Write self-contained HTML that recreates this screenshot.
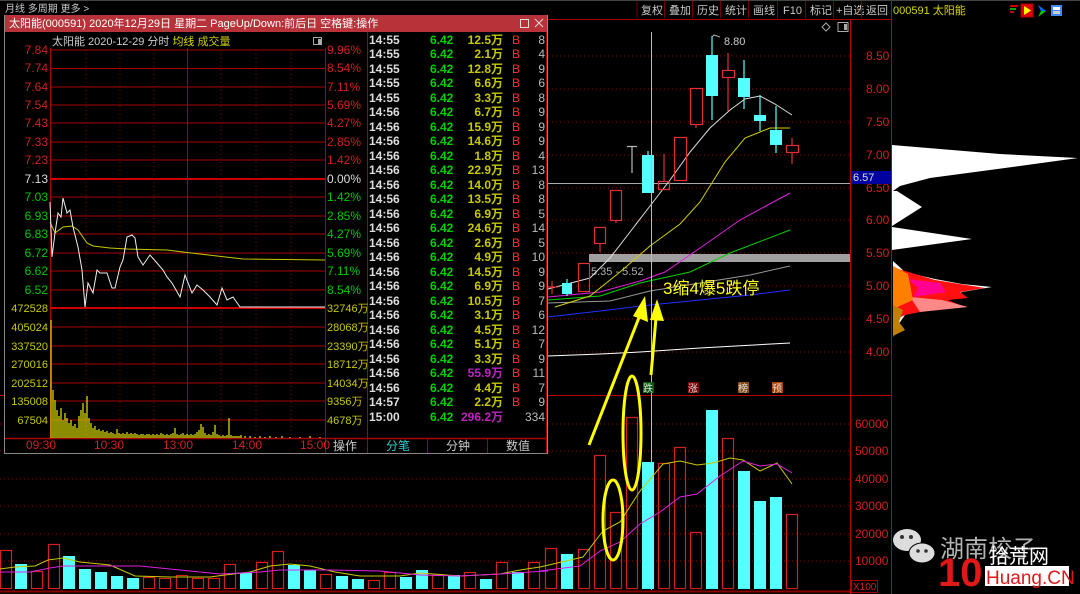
<!DOCTYPE html>
<html><head><meta charset="utf-8"><style>
html,body{margin:0;padding:0;background:#000;width:1080px;height:594px;overflow:hidden}
svg{display:block;font-family:"Liberation Sans","Noto Sans CJK SC",sans-serif}
.g{fill:#c8c8c8}
</style></head><body>
<svg width="1080" height="594" viewBox="0 0 1080 594" font-size="11" xmlns="http://www.w3.org/2000/svg">
<rect width="1080" height="594" fill="#000"/>
<!-- top bar -->
<text x="5" y="12" class="g" font-size="10">月线  多周期  更多 &gt;</text>
<g fill="#c8c8c8" font-size="11">
<text x="641" y="14">复权</text><text x="669" y="14">叠加</text><text x="697" y="14">历史</text><text x="725" y="14">统计</text><text x="753" y="14">画线</text><text x="783" y="14">F10</text><text x="810" y="14">标记</text><text x="836" y="14">+自选</text><text x="866" y="14">返回</text>
</g>
<g stroke="#700" stroke-width="1">
<line x1="637" y1="1" x2="637" y2="18"/><line x1="664.5" y1="1" x2="664.5" y2="18"/><line x1="692.5" y1="1" x2="692.5" y2="18"/><line x1="720.5" y1="1" x2="720.5" y2="18"/><line x1="748.5" y1="1" x2="748.5" y2="18"/><line x1="777.5" y1="1" x2="777.5" y2="18"/><line x1="805.5" y1="1" x2="805.5" y2="18"/><line x1="833.5" y1="1" x2="833.5" y2="18"/><line x1="861.5" y1="1" x2="861.5" y2="18"/>
</g>
<line x1="548" y1="19.5" x2="891" y2="19.5" stroke="#a00"/>
<line x1="0" y1="0.5" x2="1080" y2="0.5" stroke="#444"/>
<text x="893" y="14" fill="#d8d800" font-size="11">000591 太阳能</text>
<g><rect x="1010" y="5" width="8" height="2" fill="#c00"/><rect x="1010" y="8" width="6" height="2" fill="#0a0"/><rect x="1010" y="11" width="4" height="2" fill="#c00"/>
<rect x="1021" y="4" width="12" height="13" fill="#d00" stroke="#a00"/><path d="M1024 6 L1031 10.5 L1024 15Z" fill="#ff0"/>
<path d="M1038 5 L1046 11 L1038 17 L1041 11Z" fill="#0c0"/><path d="M1038 5 L1046 11 L1041 11Z" fill="#06f"/>
<rect x="1051" y="5" width="11" height="11" fill="#48f"/><rect x="1053" y="7" width="7" height="3" fill="#fff"/><rect x="1053" y="11" width="7" height="3" fill="#ccc"/></g>
<!-- main chart grid -->
<g stroke="#900" stroke-dasharray="1,3">
<line x1="548" y1="56" x2="850" y2="56"/><line x1="548" y1="89" x2="850" y2="89"/><line x1="548" y1="122" x2="850" y2="122"/><line x1="548" y1="155" x2="850" y2="155"/><line x1="548" y1="188" x2="850" y2="188"/><line x1="548" y1="220" x2="850" y2="220"/><line x1="548" y1="253" x2="850" y2="253"/><line x1="548" y1="286" x2="850" y2="286"/><line x1="548" y1="319" x2="850" y2="319"/><line x1="548" y1="352" x2="850" y2="352"/>
<line x1="0" y1="424" x2="850" y2="424"/><line x1="0" y1="451" x2="850" y2="451"/><line x1="0" y1="479" x2="850" y2="479"/><line x1="0" y1="506" x2="850" y2="506"/><line x1="0" y1="534" x2="850" y2="534"/><line x1="0" y1="561" x2="850" y2="561"/>
</g>
<line x1="850.5" y1="19" x2="850.5" y2="594" stroke="#b00"/>
<line x1="891.5" y1="0" x2="891.5" y2="594" stroke="#b00"/>
<line x1="0" y1="395.5" x2="891" y2="395.5" stroke="#b00"/>
<line x1="0" y1="591.5" x2="850" y2="591.5" stroke="#800" stroke-width="2"/>
<g font-size="12" fill="#d02020">
<text x="866" y="60">8.50</text><text x="866" y="93">8.00</text><text x="866" y="126">7.50</text><text x="866" y="159">7.00</text><text x="866" y="192">6.50</text><text x="866" y="224">6.00</text><text x="866" y="257">5.50</text><text x="866" y="290">5.00</text><text x="866" y="323">4.50</text><text x="866" y="356">4.00</text>
<text x="855" y="428">60000</text><text x="855" y="455">50000</text><text x="855" y="483">40000</text><text x="855" y="510">30000</text><text x="855" y="538">20000</text><text x="855" y="565">10000</text>
</g>
<rect x="851.5" y="580.5" width="26" height="12" fill="none" stroke="#a00"/><text x="853" y="590" fill="#d02020" font-size="10">X100</text>
<path d="M826 23 L830 27 L826 31 L822 27Z" fill="none" stroke="#aaa"/>
<rect x="838" y="22.5" width="10" height="9" fill="none" stroke="#aaa"/><rect x="844" y="24" width="3" height="6" fill="#aaa"/>
<rect x="589" y="254" width="261" height="8" fill="#a0a0a0"/>
<text x="591" y="275" fill="#b0b0b0" font-size="11">5.35 - 5.52</text>
<line x1="548" y1="183.5" x2="850" y2="183.5" stroke="#aaa"/>
<rect x="851" y="171" width="40" height="13" fill="#0000a0"/><text x="853" y="181" fill="#ddd" font-size="11">6.57</text>
<g fill="none" stroke-width="1">
<polyline stroke="#fff" points="548,356 600,354 640,352 700,348 790,343"/>
<polyline stroke="#2030ff" points="548,317 600,311 650,305 700,300 750,295 790,290"/>
<polyline stroke="#999" points="548,303 610,301 650,291 700,283 750,275 790,266"/>
<polyline stroke="#00d000" points="548,300 600,296 640,283 690,272 730,253 790,230"/>
<polyline stroke="#e020e0" points="548,297 600,292 640,281 665,272 700,248 740,220 790,193"/>
<polyline stroke="#d0d000" points="555,307 590,296 620,272 650,246 680,224 700,202 725,162 745,138 770,128 790,128"/>
<polyline stroke="#ddd" points="548,289 590,278 610,258 630,232 650,206 670,180 690,152 710,128 730,110 745,99 760,96 775,104 792,115"/>
</g>
<g stroke-width="1.2">
<line x1="552" y1="281" x2="552" y2="294" stroke="#e03030"/><line x1="546" y1="287" x2="558" y2="287" stroke="#e03030"/>
<line x1="567" y1="279" x2="567" y2="296" stroke="#5ff"/><rect x="562" y="283" width="10" height="11" fill="#5ff"/>
<rect x="578.5" y="263.5" width="11" height="28" fill="none" stroke="#e03030"/>
<line x1="600" y1="243" x2="600" y2="252" stroke="#e03030"/><rect x="594.5" y="227.5" width="11" height="16" fill="none" stroke="#e03030"/>
<line x1="616" y1="220" x2="616" y2="223" stroke="#e03030"/><rect x="610.5" y="190.5" width="11" height="30" fill="none" stroke="#e03030"/>
<line x1="632" y1="146" x2="632" y2="173" stroke="#bbb"/><line x1="627" y1="146.5" x2="637" y2="146.5" stroke="#bbb"/>
<line x1="648" y1="151" x2="648" y2="193" stroke="#5ff"/><rect x="642" y="155" width="12" height="38" fill="#5ff"/>
<line x1="664" y1="154" x2="664" y2="181" stroke="#e03030"/><rect x="658.5" y="181.5" width="11" height="8" fill="none" stroke="#e03030"/>
<rect x="674.5" y="137.5" width="12" height="43" fill="none" stroke="#e03030"/>
<line x1="696" y1="125" x2="696" y2="128" stroke="#e03030"/><rect x="690.5" y="88.5" width="12" height="36" fill="none" stroke="#e03030"/>
<line x1="712" y1="36" x2="712" y2="120" stroke="#5ff"/><rect x="706" y="55" width="12" height="41" fill="#5ff"/>
<line x1="728" y1="53" x2="728" y2="111" stroke="#e03030"/><rect x="722.5" y="70.5" width="12" height="7" fill="#000" stroke="#e03030"/>
<line x1="744" y1="60" x2="744" y2="109" stroke="#5ff"/><rect x="738" y="78" width="12" height="19" fill="#5ff"/>
<line x1="760" y1="95" x2="760" y2="131" stroke="#5ff"/><rect x="754" y="115" width="12" height="6" fill="#5ff"/>
<line x1="776" y1="106" x2="776" y2="153" stroke="#5ff"/><rect x="770" y="130" width="12" height="15" fill="#5ff"/>
<line x1="792" y1="138" x2="792" y2="164" stroke="#e03030"/><rect x="786.5" y="145.5" width="12" height="7" fill="#000" stroke="#e03030"/>
</g>
<path d="M712 37 L714 35 L720 37" stroke="#aaa" fill="none"/><text x="724" y="45" fill="#ccc" font-size="11">8.80</text>
<line x1="651.5" y1="32" x2="651.5" y2="590" stroke="#bbb"/>
<rect x="643" y="382" width="11" height="11" fill="#0a5a0a"/><text x="643" y="392" fill="#ddd" font-size="10">跌</text>
<rect x="688" y="382" width="11" height="11" fill="#700"/><text x="688" y="392" fill="#ddd" font-size="10">涨</text>
<rect x="738" y="382" width="11" height="11" fill="#8a4a10"/><text x="738" y="392" fill="#ddd" font-size="10">榜</text>
<rect x="772" y="382" width="11" height="11" fill="#b04000"/><text x="772" y="392" fill="#ddd" font-size="10">预</text>
<g stroke="#d02020" fill="none" stroke-width="1.2">
<rect x="545.5" y="548.5" width="11" height="40"/><rect x="578.5" y="549.5" width="11" height="39"/><rect x="594.5" y="455.5" width="11" height="133"/><rect x="610.5" y="512.5" width="11" height="76"/><rect x="626.5" y="417.5" width="11" height="171"/><rect x="658.5" y="463.5" width="11" height="125"/><rect x="674.5" y="447.5" width="11" height="141"/><rect x="690.5" y="532.5" width="11" height="56"/><rect x="722.5" y="438.5" width="11" height="150"/><rect x="786.5" y="514.5" width="11" height="74"/>
</g>
<g fill="#5ff"><rect x="561" y="554" width="12" height="35"/><rect x="642" y="462" width="12" height="127"/><rect x="706" y="410" width="12" height="179"/><rect x="738" y="471" width="12" height="118"/><rect x="754" y="501" width="12" height="88"/><rect x="770" y="497" width="12" height="92"/></g>
<polyline fill="none" stroke="#c8c800" points="540,567 583,557 603,531 620,522 640,491 663,464 680,461 697,465 713,463 730,458 743,460 760,471 777,463 792,484"/>
<polyline fill="none" stroke="#e020e0" points="540,571 580,566 600,551 620,542 640,524 660,512 680,497 697,494 720,476 743,461 760,466 777,464 792,473"/>
<g fill="none" stroke="#ffff00" stroke-width="3">
<ellipse cx="613" cy="520" rx="10" ry="40"/><ellipse cx="632" cy="433" rx="9" ry="57"/>
<line x1="589" y1="445" x2="640" y2="315"/><line x1="651" y1="375" x2="656" y2="318"/>
</g>
<path d="M645 296 L648 322 L633 316Z" fill="#ff0"/><path d="M657 299 L664 321 L650 320Z" fill="#ff0"/>
<text x="663" y="294" fill="#ffff20" font-size="17">3缩4爆5跌停</text>
<g stroke="#d02020" fill="none" stroke-width="1.2">
<rect x="0.5" y="550.5" width="11" height="38"/><rect x="31.5" y="571.5" width="11" height="17"/><rect x="48.5" y="544.5" width="11" height="44"/><rect x="143.5" y="577.5" width="11" height="11"/><rect x="159.5" y="578.5" width="11" height="10"/><rect x="176.5" y="575.5" width="11" height="13"/><rect x="192.5" y="578.5" width="11" height="10"/><rect x="208.5" y="578.5" width="11" height="10"/><rect x="224.5" y="564.5" width="11" height="24"/><rect x="256.5" y="562.5" width="11" height="26"/><rect x="272.5" y="551.5" width="11" height="37"/><rect x="320.5" y="574.5" width="11" height="14"/><rect x="368.5" y="580.5" width="11" height="8"/><rect x="384.5" y="572.5" width="11" height="16"/><rect x="432.5" y="575.5" width="11" height="13"/><rect x="464.5" y="572.5" width="11" height="16"/><rect x="496.5" y="562.5" width="11" height="26"/><rect x="528.5" y="562.5" width="11" height="26"/>
</g>
<g fill="#5ff"><rect x="15" y="564" width="12" height="25"/><rect x="63" y="556" width="12" height="33"/><rect x="79" y="569" width="12" height="20"/><rect x="95" y="572" width="12" height="17"/><rect x="111" y="576" width="12" height="13"/><rect x="127" y="578" width="12" height="11"/><rect x="240" y="573" width="12" height="16"/><rect x="288" y="565" width="12" height="24"/><rect x="304" y="570" width="12" height="19"/><rect x="336" y="576" width="12" height="13"/><rect x="352" y="579" width="12" height="10"/><rect x="400" y="577" width="12" height="12"/><rect x="416" y="570" width="12" height="19"/><rect x="448" y="575" width="12" height="14"/><rect x="480" y="579" width="12" height="10"/><rect x="512" y="572" width="12" height="17"/></g>
<polyline fill="none" stroke="#c8c800" points="0,569 15,567 35,566 48,560 63,558 80,562 110,565 135,576 170,577 210,577 225,575 250,572 270,566 290,564 310,566 335,572 360,576 400,576 420,573 460,576 480,575 500,574 520,570 540,567"/>
<polyline fill="none" stroke="#e020e0" points="0,572 30,572 50,568 63,566 100,566 140,566 180,570 220,574 260,572 280,570 330,570 380,571 420,575 460,576 500,574 530,572 548,571"/>
<!-- right panel profile -->
<path d="M892 145 L1000 154 L1078 158 L990 170 L930 178 L900 186 L893 191 L892 191Z" fill="#fff"/>
<path d="M897 191 L922 207 L892 226 L892 191Z" fill="#fff"/>
<path d="M892 227 L972 239 L892 250Z" fill="#fff"/>
<path d="M893 261 L905 272 L935 279 L962 284 L992 287 L962 292 L940 302 L905 315 L898 325 L893 337Z" fill="#fff"/>
<path d="M895 268 L935 280 L985 288 L960 292 L968 298 L948 300 L962 306 L930 310 L905 315 L895 320Z" fill="#ff1010"/>
<path d="M908 279 L940 283 L946 292 L914 297 L918 288Z" fill="#ff0090"/>
<path d="M910 297 L942 300 L968 307 L920 312Z" fill="#ff8888"/>
<path d="M893 266 L908 274 L913 300 L902 305 L893 309Z" fill="#ff8000"/>
<path d="M893 305 L903 310 L899 322 L905 330 L893 336Z" fill="#c08000"/>
<!-- logo -->
<g fill="#ddd"><ellipse cx="907" cy="540" rx="14" ry="11"/><ellipse cx="922" cy="553" rx="13" ry="10"/></g>
<g fill="#333"><circle cx="902" cy="537" r="2"/><circle cx="911" cy="537" r="2"/><circle cx="918" cy="551" r="1.8"/><circle cx="926" cy="551" r="1.8"/></g>
<ellipse cx="922" cy="553" rx="13" ry="10" fill="none" stroke="#000" stroke-width="1"/>
<text x="940" y="557" fill="#eee" fill-opacity="0.75" font-size="24">湖南校子</text>
<text x="938" y="586" fill="#e01818" font-size="40" font-weight="bold">10</text>
<rect x="985" y="566" width="84" height="20" fill="#fff"/>
<text x="986" y="584" fill="#e01818" font-size="19">Huang.CN</text>
<text x="989" y="563" fill="#fff" font-size="20">拾荒网</text>

<!-- POPUP -->
<rect x="4" y="15" width="544" height="438" fill="#000"/>
<rect x="4.5" y="15.5" width="543" height="438" fill="none" stroke="#888"/>
<rect x="5" y="15" width="542" height="17" fill="#b8323a"/>
<text x="9" y="27" fill="#fff" font-size="11">太阳能(000591) 2020年12月29日 星期二 PageUp/Down:前后日 空格键:操作</text>
<rect x="520.5" y="19.5" width="8" height="8" fill="none" stroke="#ddd"/>
<path d="M535 19 L543 27 M543 19 L535 27" stroke="#ddd"/>
<text x="52" y="45" fill="#ccc" font-size="11">太阳能   2020-12-29 分时 <tspan fill="#dddd00">均线</tspan> <tspan fill="#c8c800">成交量</tspan></text>
<rect x="313.5" y="37.5" width="8" height="7" fill="none" stroke="#aaa"/><rect x="318" y="39" width="3" height="5" fill="#aaa"/>
<g stroke="#a00" stroke-width="1">
<line x1="50" y1="50" x2="325" y2="50"/><line x1="50" y1="68.5" x2="325" y2="68.5"/><line x1="50" y1="87" x2="325" y2="87"/><line x1="50" y1="105" x2="325" y2="105"/><line x1="50" y1="123" x2="325" y2="123"/><line x1="50" y1="142" x2="325" y2="142"/><line x1="50" y1="160" x2="325" y2="160"/>
<line x1="50" y1="179" x2="325" y2="179" stroke-width="2" stroke="#c00"/>
<line x1="50" y1="197" x2="325" y2="197"/><line x1="50" y1="216" x2="325" y2="216"/><line x1="50" y1="234" x2="325" y2="234"/><line x1="50" y1="253" x2="325" y2="253"/><line x1="50" y1="271" x2="325" y2="271"/><line x1="50" y1="290" x2="325" y2="290"/>
<line x1="50" y1="308" x2="325" y2="308" stroke-width="2" stroke="#c00"/>
<line x1="50" y1="327" x2="325" y2="327"/><line x1="50" y1="346" x2="325" y2="346"/><line x1="50" y1="364" x2="325" y2="364"/><line x1="50" y1="383" x2="325" y2="383"/><line x1="50" y1="401" x2="325" y2="401"/><line x1="50" y1="420" x2="325" y2="420"/>
<line x1="5" y1="438.5" x2="547" y2="438.5" stroke-width="1.5"/>
<line x1="50.5" y1="48" x2="50.5" y2="438"/><line x1="325.5" y1="48" x2="325.5" y2="453"/><line x1="187.5" y1="48" x2="187.5" y2="438"/>
<line x1="367.5" y1="32" x2="367.5" y2="453"/>
<line x1="427.5" y1="438" x2="427.5" y2="453"/><line x1="487.5" y1="438" x2="487.5" y2="453"/><line x1="546.5" y1="32" x2="546.5" y2="453"/>
</g>
<g stroke="#900" stroke-dasharray="1,3">
<line x1="86" y1="50" x2="86" y2="438"/><line x1="120" y1="50" x2="120" y2="438"/><line x1="154" y1="50" x2="154" y2="438"/><line x1="221" y1="50" x2="221" y2="438"/><line x1="256" y1="50" x2="256" y2="438"/><line x1="291" y1="50" x2="291" y2="438"/>
</g>
<g font-size="12" text-anchor="end">
<text x="48" y="54" fill="#d02020">7.84</text><text x="48" y="72" fill="#d02020">7.74</text><text x="48" y="91" fill="#d02020">7.64</text><text x="48" y="109" fill="#d02020">7.54</text><text x="48" y="127" fill="#d02020">7.43</text><text x="48" y="146" fill="#d02020">7.33</text><text x="48" y="164" fill="#d02020">7.23</text><text x="48" y="183" fill="#ddd">7.13</text>
<text x="48" y="201" fill="#00c800">7.03</text><text x="48" y="220" fill="#00c800">6.93</text><text x="48" y="238" fill="#00c800">6.83</text><text x="48" y="257" fill="#00c800">6.72</text><text x="48" y="275" fill="#00c800">6.62</text><text x="48" y="294" fill="#00c800">6.52</text>
<g fill="#c8c800" font-size="11"><text x="48" y="312">472528</text><text x="48" y="331">405024</text><text x="48" y="350">337520</text><text x="48" y="368">270016</text><text x="48" y="387">202512</text><text x="48" y="405">135008</text><text x="48" y="424">67504</text></g>
</g>
<g font-size="12">
<text x="327" y="54" fill="#d02020">9.96%</text><text x="327" y="72" fill="#d02020">8.54%</text><text x="327" y="91" fill="#d02020">7.11%</text><text x="327" y="109" fill="#d02020">5.69%</text><text x="327" y="127" fill="#d02020">4.27%</text><text x="327" y="146" fill="#d02020">2.85%</text><text x="327" y="164" fill="#d02020">1.42%</text><text x="327" y="183" fill="#ddd">0.00%</text>
<text x="327" y="201" fill="#00c800">1.42%</text><text x="327" y="220" fill="#00c800">2.85%</text><text x="327" y="238" fill="#00c800">4.27%</text><text x="327" y="257" fill="#00c800">5.69%</text><text x="327" y="275" fill="#00c800">7.11%</text><text x="327" y="294" fill="#00c800">8.54%</text>
<g fill="#c8c800" font-size="11"><text x="327" y="312">32746万</text><text x="327" y="331">28068万</text><text x="327" y="350">23390万</text><text x="327" y="368">18712万</text><text x="327" y="387">14034万</text><text x="327" y="405">9356万</text><text x="327" y="424">4678万</text></g>
</g>
<polyline fill="none" stroke="#c8c800" points="50,222 55,233 63,227 72,226 78,230 87,243 93,246 110,248 127,249 167,250 183,252 217,256 243,259 325,260"/>
<polyline fill="none" stroke="#eee" points="50,202 52,257 55,233 58,213 61,217 63,198 67,213 70,210 73,227 78,247 82,270 85,307 88,283 93,293 97,270 100,273 107,273 112,288 115,288 120,267 123,260 127,237 132,235 135,238 138,257 143,265 150,255 157,263 163,270 167,277 172,283 180,297 185,275 192,293 197,285 203,290 210,297 217,305 222,288 227,300 233,297 240,307 325,307"/>
<path stroke="#c8c800" stroke-width="1.4" d="M51 438V320M53 438V390M55 438V400M57 438V410M59 438V416M61 438V408M63 438V420M65 438V413M67 438V418M69 438V423M71 438V420M73 438V426M75 438V424M77 438V428M79 438V416M81 438V410M83 438V403M85 438V413M87 438V396M89 438V418M91 438V423M93 438V428M95 438V426M97 438V430M99 438V429M101 438V431M103 438V430M105 438V432M107 438V431M109 438V433M111 438V432M113 438V433M115 438V434M117 438V429M119 438V433M121 438V434M123 438V433M125 438V434M127 438V432M129 438V434M131 438V433M133 438V434M135 438V433M137 438V434M139 438V435M141 438V434M143 438V434M145 438V435M147 438V434M149 438V434M151 438V435M153 438V434M155 438V435M157 438V434M159 438V435M161 438V433M163 438V434M165 438V435M167 438V434M169 438V435M171 438V434M173 438V433M175 438V428M177 438V434M179 438V435M181 438V434M183 438V433M185 438V435M187 438V434M189 438V435M191 438V434M193 438V435M195 438V434M197 438V432M199 438V430M201 438V424M203 438V427M205 438V433M207 438V435M209 438V434M211 438V435M213 438V432M215 438V425M217 438V434M219 438V435M221 438V436M223 438V435M225 438V436M227 438V435M229 438V418M231 438V435M233 438V436M235 438V436M237 438V436M239 438V436M241 438V435M245 438V436M250 438V436M255 438V437M260 438V436M265 438V437M270 438V436M276 438V437M282 438V436M290 438V437M300 438V437M310 438V436M320 438V437"/>
<g fill="#d02020" font-size="12"><text x="26" y="449">09:30</text><text x="94" y="449">10:30</text><text x="163" y="449">13:00</text><text x="232" y="449">14:00</text><text x="300" y="449">15:00</text></g>
<text x="333" y="450" fill="#ccc" font-size="12">操作</text><text x="386" y="450" fill="#3cc" font-size="12">分笔</text><text x="446" y="450" fill="#ccc" font-size="12">分钟</text><text x="506" y="450" fill="#ccc" font-size="12">数值</text>
<g font-size="12" font-weight="bold">
<g fill="#ddd">
<text x="369" y="44">14:55</text><text x="369" y="58">14:55</text><text x="369" y="73">14:55</text><text x="369" y="87">14:55</text><text x="369" y="102">14:55</text><text x="369" y="116">14:56</text><text x="369" y="131">14:56</text><text x="369" y="145">14:56</text><text x="369" y="160">14:56</text><text x="369" y="174">14:56</text><text x="369" y="189">14:56</text><text x="369" y="203">14:56</text><text x="369" y="218">14:56</text><text x="369" y="232">14:56</text><text x="369" y="247">14:56</text><text x="369" y="261">14:56</text><text x="369" y="276">14:56</text><text x="369" y="290">14:56</text><text x="369" y="305">14:56</text><text x="369" y="319">14:56</text><text x="369" y="334">14:56</text><text x="369" y="348">14:56</text><text x="369" y="363">14:56</text><text x="369" y="377">14:56</text><text x="369" y="392">14:56</text><text x="369" y="406">14:57</text><text x="369" y="421">15:00</text>
</g>
<g fill="#00d000">
<text x="430" y="44">6.42</text><text x="430" y="58">6.42</text><text x="430" y="73">6.42</text><text x="430" y="87">6.42</text><text x="430" y="102">6.42</text><text x="430" y="116">6.42</text><text x="430" y="131">6.42</text><text x="430" y="145">6.42</text><text x="430" y="160">6.42</text><text x="430" y="174">6.42</text><text x="430" y="189">6.42</text><text x="430" y="203">6.42</text><text x="430" y="218">6.42</text><text x="430" y="232">6.42</text><text x="430" y="247">6.42</text><text x="430" y="261">6.42</text><text x="430" y="276">6.42</text><text x="430" y="290">6.42</text><text x="430" y="305">6.42</text><text x="430" y="319">6.42</text><text x="430" y="334">6.42</text><text x="430" y="348">6.42</text><text x="430" y="363">6.42</text><text x="430" y="377">6.42</text><text x="430" y="392">6.42</text><text x="430" y="406">6.42</text><text x="430" y="421">6.42</text>
</g>
<g fill="#c8c800" text-anchor="end">
<text x="503" y="44">12.5万</text><text x="503" y="58">2.1万</text><text x="503" y="73">12.8万</text><text x="503" y="87">6.6万</text><text x="503" y="102">3.3万</text><text x="503" y="116">6.7万</text><text x="503" y="131">15.9万</text><text x="503" y="145">14.6万</text><text x="503" y="160">1.8万</text><text x="503" y="174">22.9万</text><text x="503" y="189">14.0万</text><text x="503" y="203">13.5万</text><text x="503" y="218">6.9万</text><text x="503" y="232">24.6万</text><text x="503" y="247">2.6万</text><text x="503" y="261">4.9万</text><text x="503" y="276">14.5万</text><text x="503" y="290">6.9万</text><text x="503" y="305">10.5万</text><text x="503" y="319">3.1万</text><text x="503" y="334">4.5万</text><text x="503" y="348">5.1万</text><text x="503" y="363">3.3万</text><text x="503" y="377" fill="#c020c0">55.9万</text><text x="503" y="392">4.4万</text><text x="503" y="406">2.2万</text><text x="503" y="421" fill="#c020c0">296.2万</text>
</g>
<g fill="#ff3030" font-weight="normal">
<text x="512" y="44">B</text><text x="512" y="58">B</text><text x="512" y="73">B</text><text x="512" y="87">B</text><text x="512" y="102">B</text><text x="512" y="116">B</text><text x="512" y="131">B</text><text x="512" y="145">B</text><text x="512" y="160">B</text><text x="512" y="174">B</text><text x="512" y="189">B</text><text x="512" y="203">B</text><text x="512" y="218">B</text><text x="512" y="232">B</text><text x="512" y="247">B</text><text x="512" y="261">B</text><text x="512" y="276">B</text><text x="512" y="290">B</text><text x="512" y="305">B</text><text x="512" y="319">B</text><text x="512" y="334">B</text><text x="512" y="348">B</text><text x="512" y="363">B</text><text x="512" y="377">B</text><text x="512" y="392">B</text><text x="512" y="406">B</text>
</g>
<g fill="#bbb" text-anchor="end" font-weight="normal">
<text x="545" y="44">8</text><text x="545" y="58">4</text><text x="545" y="73">9</text><text x="545" y="87">6</text><text x="545" y="102">8</text><text x="545" y="116">9</text><text x="545" y="131">9</text><text x="545" y="145">9</text><text x="545" y="160">4</text><text x="545" y="174">13</text><text x="545" y="189">8</text><text x="545" y="203">8</text><text x="545" y="218">5</text><text x="545" y="232">14</text><text x="545" y="247">5</text><text x="545" y="261">10</text><text x="545" y="276">9</text><text x="545" y="290">9</text><text x="545" y="305">7</text><text x="545" y="319">6</text><text x="545" y="334">12</text><text x="545" y="348">7</text><text x="545" y="363">9</text><text x="545" y="377">11</text><text x="545" y="392">7</text><text x="545" y="406">9</text><text x="545" y="421">334</text>
</g>
</g>
</svg>
</body></html>
